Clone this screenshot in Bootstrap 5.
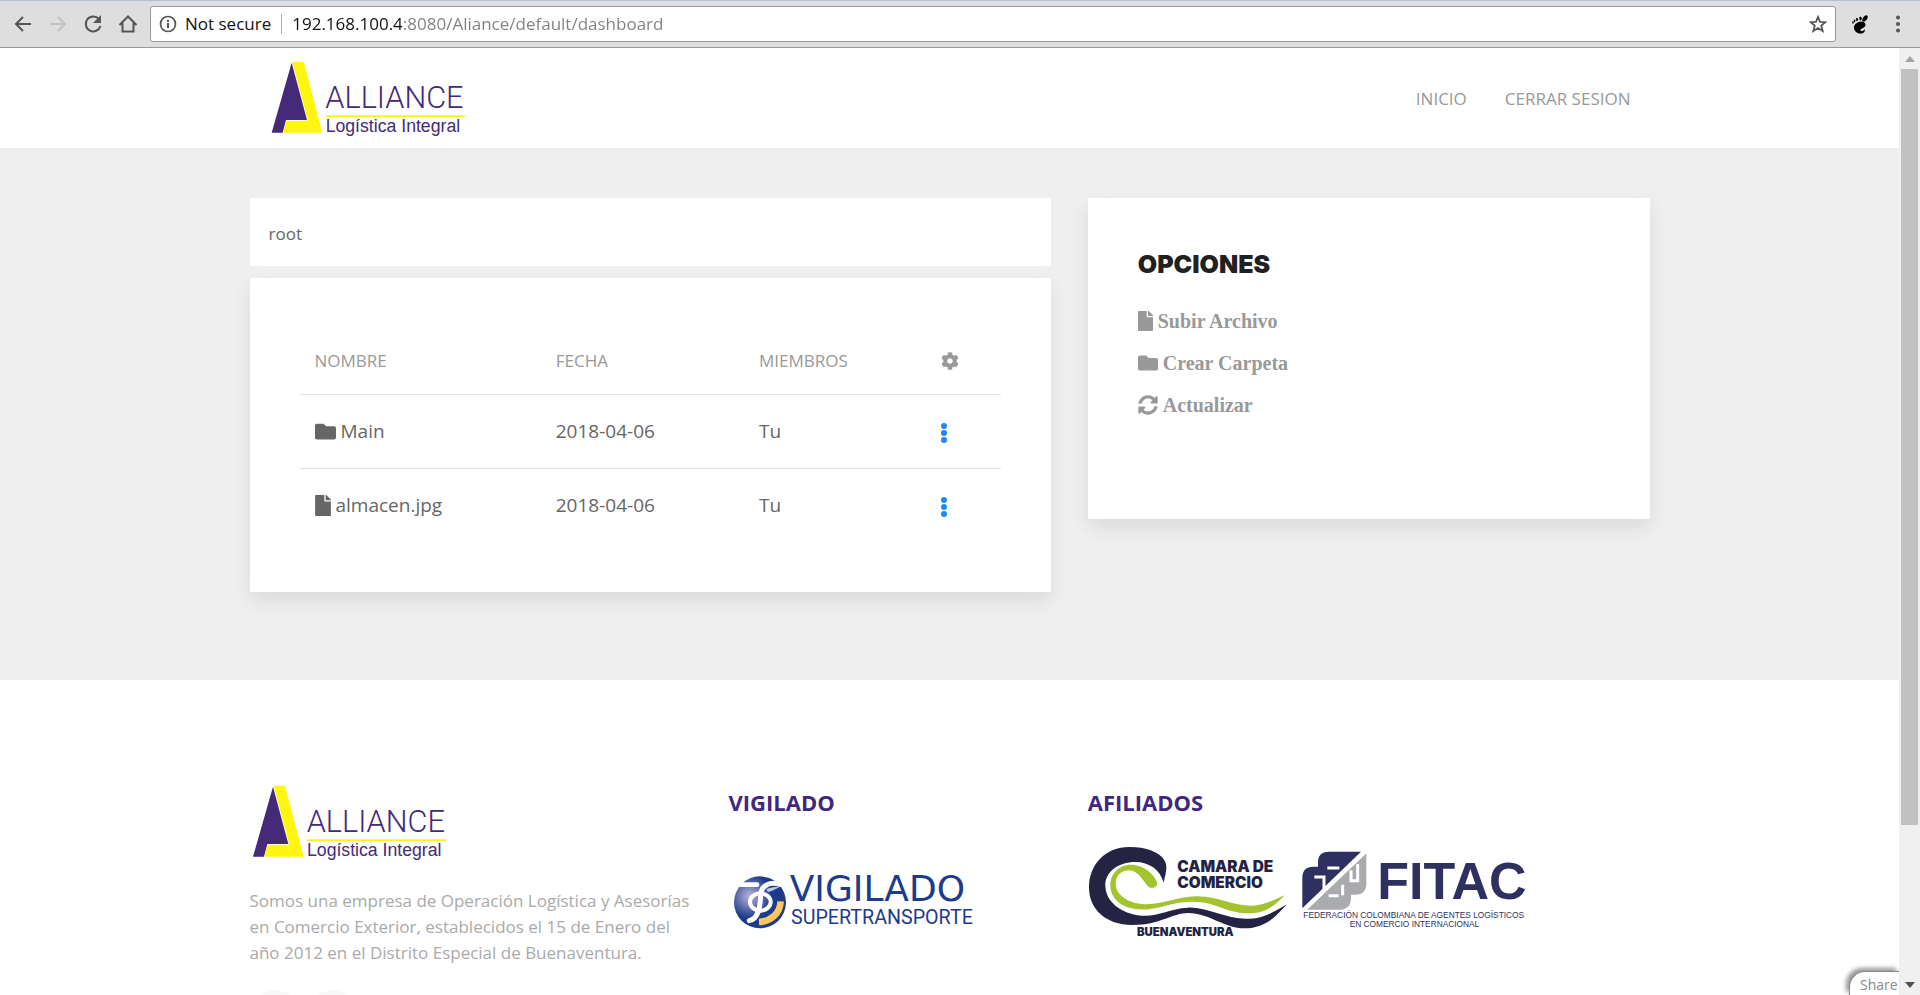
<!DOCTYPE html>
<html lang="es">
<head>
<meta charset="utf-8">
<meta name="viewport" content="width=device-width, initial-scale=1">
<title>Alliance Logística Integral</title>
<link href="https://cdn.jsdelivr.net/npm/bootstrap@5.3.0/dist/css/bootstrap.min.css" rel="stylesheet">
<style>
  body { font-family: "Open Sans", "Noto Sans", sans-serif; font-size: 17px; line-height: 26px; color: #666; background: #fff; }
  a { text-decoration: none; }
  svg { display: block; flex: none; }

  /* browser bar */
  .browser-bar { height: 48px; padding: 0 16px 0 12px; background: #dedede; border-top: 1px solid #b5c0cf; border-bottom: 1px solid #999; }
  .bar-tools { gap: 12px; margin-right: 10px; }
  .bar-btn { display: flex; padding: 0; border: 0; background: none; color: #555; }
  .omnibox { height: 36px; background: #fff; border: 1px solid #999; border-radius: 3px; color: #111; }
  .omnibox .divider { width: 1px; height: 20px; background: #aaa; margin: 0 10px; }
  .omnibox input { border: 0; outline: 0; padding: 0; min-width: 0; color: transparent; background: linear-gradient(90deg, #111 110px, #808080 110px); -webkit-background-clip: text; background-clip: text; }

  /* viewport and scrollbar */
  .view-area { min-height: 0; }
  .page-frame { min-width: 0; }
  .page-view { overflow-y: auto; scrollbar-width: none; min-width: 0; }
  .page-view::-webkit-scrollbar { display: none; }
  .scroll-track { width: 21px; background: #f0f0f0; padding: 0 2px; }
  .scroll-thumb { background: #c1c1c1; flex: 0 1 756px; }
  .scroll-arrow { height: 21px; flex: none; }

  .site-container { max-width: 1437px; --bs-gutter-x: 37px; }
  .site-container .row { --bs-gutter-x: 37px; }
  .site-nav { min-height: 100px; }
  .site-nav .nav-link { padding: 2px 19px 0; color: #999; font-size: 17px; }

  .workspace { background: #efefef; padding: 50px 0 88px; }
  .panel { background: #fff; padding: 50px; }
  .panel-shadow { box-shadow: 0 8px 18px rgba(0,0,0,.09); }
  .crumb { padding: 23px 19px 19px; margin-bottom: 12px; }
  .icon-line { display: flex; align-items: center; gap: 5px; }

  .files { margin: 0; color: #666; font-size: 19px; table-layout: fixed; }
  .files > :not(caption) > * > * { padding: 0 0 0 15px; height: 74px; background: none; color: inherit; border-bottom: 0; border-top: 1px solid #e3e3e3; vertical-align: middle; box-shadow: none; }
  .files > thead > tr > th { height: 66px; border-top: 0; font-weight: 400; font-size: 17px; color: #999; }
  .files .bar-btn { padding-top: 4px; }
  .col-name { width: 34.4%; } .col-date { width: 29%; } .col-members { width: 26%; }

  .options { padding-bottom: 85px; }
  .options h2 { font-family: Inter, "Liberation Sans", sans-serif; font-weight: 900; font-size: 25px; line-height: 32px; color: #212121; margin: 0 0 28px; }
  .options ul { font-family: "Liberation Serif", serif; font-weight: 700; font-size: 20px; }
  .options li { height: 42px; }
  .options a { color: #999; }

  .site-footer { padding: 102px 0 60px; color: #aaa; }
  .site-footer h3 { font-size: 22px; line-height: 32px; font-weight: 700; color: #41277d; margin: 4px 0 0; }
  .about { margin: 26px 0 24px; }
  .seal { margin-top: 54px; }
  .affiliates { margin-top: 26px; gap: 14px; align-items: center; }
  .social { width: 50px; height: 50px; border-radius: 50%; background: #f8f8f8; color: #aaa; }
  .share-tab { position: absolute; right: 0; bottom: 0; height: 24px; width: 50px; padding: 0 0 0 10px; overflow: hidden; background: #fff; border: 1px solid #888; border-width: 1px 0 0 1px; border-radius: 16px 0 0 0; box-shadow: -3px -3px 4px #999; color: #888; font-size: 14px; line-height: 25px; }
</style>
</head>
<body>
<svg width="0" height="0" class="position-absolute" aria-hidden="true">
  <symbol id="i-folder" viewBox="0 0 512 512"><path fill="currentColor" d="M464 128H272l-64-64H48C21.500 64 0 85.500 0 112v288c0 26.500 21.500 48 48 48h416c26.500 0 48-21.500 48-48V176c0-26.500-21.500-48-48-48z"/></symbol>
  <symbol id="i-file" viewBox="0 0 384 512"><path fill="currentColor" d="M224 136V0H24C10.700 0 0 10.700 0 24v464c0 13.300 10.700 24 24 24h336c13.300 0 24-10.700 24-24V160H248c-13.200 0-24-10.800-24-24zm160-14.100v6.100H256V0h6.100c6.400 0 12.500 2.500 17 7l97.900 98c4.500 4.500 7 10.600 7 16.900z"/></symbol>
  <symbol id="i-sync" viewBox="0 0 512 512"><path fill="currentColor" d="M370.720 133.280C339.458 104.008 298.888 87.962 255.848 88c-77.458.068-144.328 53.178-162.791 126.850-1.344 5.363-6.122 9.150-11.651 9.150H24.103c-7.498 0-13.194-6.807-11.807-14.176C33.933 94.924 134.813 8 256 8c66.448 0 126.791 26.136 171.315 68.685L463.030 40.970C478.149 25.851 504 36.559 504 57.941V192c0 13.255-10.745 24-24 24H345.941c-21.382 0-32.090-25.851-16.971-40.971l41.750-41.749zM32 296h134.059c21.382 0 32.090 25.851 16.971 40.971l-41.750 41.750c31.262 29.273 71.835 45.319 114.876 45.280 77.418-.070 144.315-53.144 162.787-126.849 1.344-5.363 6.122-9.150 11.651-9.150h57.304c7.498 0 13.194 6.807 11.807 14.176C478.067 417.076 377.187 504 256 504c-66.448 0-126.791-26.136-171.315-68.685L48.970 471.030C33.851 486.149 8 475.441 8 454.059V320c0-13.255 10.745-24 24-24z"/></symbol>
  <symbol id="i-cog" viewBox="0 0 512 512"><path fill="currentColor" d="M487.4 315.7l-42.6-24.6c4.3-23.2 4.3-47 0-70.2l42.6-24.6c4.9-2.8 7.1-8.6 5.5-14-11.1-35.600-30-67.800-54.700-94.600-3.800-4.100-10-5.100-14.800-2.300L380.800 110c-17.900-15.400-38.500-27.300-60.800-35.100V25.800c0-5.600-3.900-10.500-9.400-11.700-36.700-8.200-74.300-7.800-109.200 0-5.500 1.200-9.400 6.100-9.400 11.700V75c-22.200 7.900-42.800 19.800-60.800 35.100L88.700 85.500c-4.900-2.800-11-1.900-14.800 2.300-24.700 26.700-43.600 58.900-54.700 94.600-1.700 5.400.6 11.200 5.500 14L67.300 221c-4.300 23.200-4.300 47 0 70.200l-42.600 24.600c-4.900 2.800-7.100 8.600-5.500 14 11.100 35.600 30 67.800 54.700 94.600 3.800 4.100 10 5.100 14.800 2.300l42.600-24.600c17.900 15.400 38.500 27.300 60.800 35.100v49.200c0 5.600 3.900 10.500 9.400 11.700 36.700 8.200 74.300 7.800 109.200 0 5.500-1.200 9.400-6.100 9.400-11.700v-49.200c22.200-7.900 42.800-19.800 60.800-35.100l42.600 24.600c4.900 2.800 11 1.900 14.800-2.300 24.700-26.700 43.600-58.900 54.700-94.600 1.500-5.500-.7-11.300-5.600-14.100zM256 336c-44.100 0-80-35.900-80-80s35.900-80 80-80 80 35.900 80 80-35.900 80-80 80z"/></symbol>
  <symbol id="i-dots" viewBox="0 0 6 20"><g fill="#1e88f5"><circle cx="3" cy="3" r="3"/><circle cx="3" cy="10" r="3"/><circle cx="3" cy="17" r="3"/></g></symbol>
</svg>

<div class="vh-100 d-flex flex-column">
  <div class="browser-bar d-flex align-items-center flex-shrink-0">
    <div class="bar-tools d-flex align-items-center">
      <button class="bar-btn" type="button" aria-label="Atrás"><svg width="22" height="22" viewBox="0 0 22 22" fill="none" stroke="currentColor" stroke-width="2"><path d="M19 11H4M11 4l-7 7 7 7"/></svg></button>
      <button class="bar-btn" type="button" aria-label="Adelante" disabled><svg width="24" height="22" viewBox="0 0 24 22" fill="none" stroke="#c2c2c2" stroke-width="2"><path d="M4 11h15M12 4l7 7-7 7"/></svg></button>
      <button class="bar-btn" type="button" aria-label="Recargar"><svg width="22" height="22" viewBox="0 0 22 22"><path d="M17 6a7.500 7.500 0 1 0 1.500 7" fill="none" stroke="currentColor" stroke-width="2"/><path d="M19 2v8h-8z" fill="currentColor"/></svg></button>
      <button class="bar-btn" type="button" aria-label="Inicio"><svg width="24" height="22" viewBox="0 0 24 22" fill="none" stroke="currentColor" stroke-width="2"><path d="M3.500 12 12 3.500l8.500 8.500M6.500 10v8.500h11V10"/></svg></button>
    </div>
    <div class="omnibox d-flex align-items-center flex-grow-1">
      <svg class="ms-2" width="18" height="18" viewBox="0 0 18 18"><circle cx="9" cy="9" r="7.500" fill="none" stroke="#555" stroke-width="1.700"/><path d="M8 8h2v5H8zM8 5h2v2H8z" fill="#555"/></svg>
      <label for="url" class="ms-2 text-nowrap">Not secure</label>
      <span class="divider"></span>
      <input id="url" class="flex-grow-1" type="text" value="192.168.100.4:8080/Aliance/default/dashboard">
      <button class="bar-btn me-2" type="button" aria-label="Favorito"><svg width="18" height="18" viewBox="0 0 18 18"><path d="M9 1.800l2 5.100 5.400.3-4.200 3.400 1.500 5.400L9 13l-4.700 3 1.500-5.400-4.200-3.400 5.400-.3z" fill="none" stroke="currentColor" stroke-width="1.700"/></svg></button>
    </div>
    <button class="bar-btn ms-3" type="button" aria-label="Extensión"><svg width="16" height="19" viewBox="0 0 16 19" fill="#000"><path d="M13.500 9.500C13 6.500 9 5.500 5.500 7.500 2 9.500 1 12 2.500 15c1.500 3 5 4 7.500 3.500 2.500-.6 3.500-3 2.500-4.500-.5 2-3 3-4 1.500-1-2 5.500-2.500 5-6z"/><ellipse cx="13" cy="3.500" rx="2" ry="3.600" transform="rotate(35 13 3.500)"/><ellipse cx="8.500" cy="3.400" rx="1.200" ry="2"/><ellipse cx="5" cy="4.500" rx="1" ry="1.700"/><ellipse cx="2.600" cy="5.800" rx=".9" ry="1.400"/><ellipse cx="1" cy="7.400" rx=".8" ry="1.200"/></svg></button>
    <button class="bar-btn ms-4" type="button" aria-label="Menú"><svg width="12" height="18" viewBox="0 0 12 18" fill="#555"><circle cx="6" cy="2.500" r="2"/><circle cx="6" cy="9" r="2"/><circle cx="6" cy="15.500" r="2"/></svg></button>
  </div>

  <div class="view-area d-flex flex-grow-1">
    <div class="page-frame position-relative d-flex flex-grow-1">
    <div class="page-view flex-grow-1">
      <header class="container-fluid site-container">
        <nav class="site-nav navbar p-0 d-flex justify-content-between align-items-center">
          <a href="#" class="ps-3 ms-1" aria-label="Alliance">
            <svg width="200" height="80" viewBox="90 26 600 240">
              <path fill="#442a78" d="M155 40 95 250h33l10-38h63z"/>
              <path fill="#fff50f" d="M157 37h34l56 213H129l10-36h65z"/>
              <path fill="#fff50f" d="M258 198h416v6H258z"/>
              <text x="256" y="176" font-family="Roboto, sans-serif" font-weight="300" font-size="92" fill="#442a78">ALLIANCE</text>
              <text x="257" y="247" font-family="Liberation Sans, sans-serif" font-size="53" fill="#442a78">Logística Integral</text>
            </svg>
          </a>
          <div class="d-flex">
            <a class="nav-link" href="#">INICIO</a>
            <a class="nav-link" href="#">CERRAR SESION</a>
          </div>
        </nav>
      </header>

      <main class="workspace">
        <div class="container-fluid site-container">
          <div class="row">
            <div class="col-lg-7">
              <div class="panel crumb">root</div>
              <div class="panel panel-shadow">
                <table class="table files">
                  <thead><tr><th class="col-name">NOMBRE</th><th class="col-date">FECHA</th><th class="col-members">MIEMBROS</th><th><svg width="18" height="18"><use href="#i-cog"/></svg></th></tr></thead>
                  <tbody>
                    <tr><td><span class="icon-line"><svg width="21" height="21"><use href="#i-folder"/></svg>Main</span></td><td>2018-04-06</td><td>Tu</td><td><button class="bar-btn" type="button" aria-label="Opciones de Main"><svg width="6" height="20"><use href="#i-dots"/></svg></button></td></tr>
                    <tr><td><span class="icon-line"><svg width="16" height="21"><use href="#i-file"/></svg>almacen.jpg</span></td><td>2018-04-06</td><td>Tu</td><td><button class="bar-btn" type="button" aria-label="Opciones de almacen.jpg"><svg width="6" height="20"><use href="#i-dots"/></svg></button></td></tr>
                  </tbody>
                </table>
              </div>
            </div>
            <div class="col-lg-5">
              <div class="panel panel-shadow options">
                <h2>OPCIONES</h2>
                <ul class="list-unstyled mb-0">
                  <li><a href="#" class="icon-line"><svg width="15" height="20"><use href="#i-file"/></svg>Subir Archivo</a></li>
                  <li><a href="#" class="icon-line"><svg width="20" height="20"><use href="#i-folder"/></svg>Crear Carpeta</a></li>
                  <li><a href="#" class="icon-line"><svg width="20" height="20"><use href="#i-sync"/></svg>Actualizar</a></li>
                </ul>
              </div>
            </div>
          </div>
        </div>
      </main>

      <footer class="site-footer">
        <div class="container-fluid site-container">
          <div class="row">
            <div class="col-lg-4">
              <svg width="200" height="80" viewBox="86 26 600 240" role="img" aria-label="Alliance">
                <path fill="#442a78" d="M155 40 95 250h33l10-38h63z"/>
                <path fill="#fff50f" d="M157 37h34l56 213H129l10-36h65z"/>
                <path fill="#fff50f" d="M258 198h416v6H258z"/>
                <text x="256" y="176" font-family="Roboto, sans-serif" font-weight="300" font-size="92" fill="#442a78">ALLIANCE</text>
                <text x="257" y="247" font-family="Liberation Sans, sans-serif" font-size="53" fill="#442a78">Logística Integral</text>
              </svg>
              <p class="about">Somos una empresa de Operación Logística y Asesorías en Comercio Exterior, establecidos el 15 de Enero del año 2012 en el Distrito Especial de Buenaventura.</p>
              <div class="d-flex gap-2">
                <a class="social" href="#" aria-label="Facebook"></a>
                <a class="social" href="#" aria-label="Twitter"></a>
              </div>
            </div>
            <div class="col-lg-3">
              <h3>VIGILADO</h3>
              <svg class="seal" width="250" height="62" viewBox="56 300 750 186" role="img" aria-label="Vigilado Supertransporte">
                <defs><radialGradient id="globe" cx=".3" cy=".38" r=".42"><stop offset="0" stop-color="#b9b4d8"/><stop offset="1" stop-color="#1d3b8b"/></radialGradient></defs>
                <circle cx="149" cy="391" r="78" fill="url(#globe)"/>
                <path d="M90 338h50" stroke="#fff" stroke-width="14" stroke-linecap="round"/>
                <path d="M208 337c-30-9-56 3-57 33-2 40-8 70-34 76" fill="none" stroke="#fff" stroke-width="15" stroke-linecap="round"/>
                <ellipse cx="150" cy="390" rx="31" ry="26" fill="none" stroke="#fff" stroke-width="12"/>
                <path d="M169 351c15-6 28-7 38-6-9 6-24 14-35 15z" fill="#bdcbe6"/>
                <path d="M211 388c-2 37-29 60-65 62" fill="none" stroke="#fdc75a" stroke-width="20"/>
                <g fill="#1d3b8b"><text x="238" y="386" font-family="DejaVu Sans, sans-serif" font-size="108">VIGILADO</text>
                <text x="242" y="457" font-family="Roboto, sans-serif" font-size="59">SUPERTRANSPORTE</text></g>
              </svg>
            </div>
            <div class="col-lg-5">
              <h3>AFILIADOS</h3>
              <div class="affiliates d-flex">
              <svg width="200" height="92" viewBox="24 222 600 276" role="img" aria-label="Cámara de Comercio Buenaventura">
                <path fill="#252344" d="M251 338c6-28 13-48 3-66-15-27-56-41-106-41C76 231 27 284 27 352c0 66 50 113 130 113 84 0 119-36 168-36 61 0 108 46 169 46 62 0 98-39 126-72-38 24-71 41-110 43-71 4-129-36-187-33-56 3-90 28-139 24-61-5-108-42-108-91 0-41 39-70 90-70 42 0 75 24 85 62z"/>
                <path fill="#a3c32f" d="M207 352c12 5 26-2 24-15-8-25-41-53-79-53-35 0-61 27-61 61 0 39 30 66 76 72 63 8 95-21 169-22 75-1 100 37 178 35 47-1 77-30 100-54-36 16-67 31-99 31-61 0-104-30-168-28-61 2-106 28-160 23-45-4-80-29-80-61 0-24 17-40 40-40 29 0 44 36 60 51z"/>
                <g fill="#252344" font-family="Inter, sans-serif" font-weight="900"><text x="292" y="307" font-size="46">CAMARA DE</text><text x="292" y="355" font-size="46">COMERCIO</text><text x="171" y="497" font-size="34">BUENAVENTURA</text></g>
              </svg>
              <svg width="226" height="78" viewBox="38 70 678 234" role="img" aria-label="FITAC">
                <path fill="#2e3060" d="M39 242V149c0-20 12-32 32-32h15v-13c0-21 11-32 32-32h97z"/>
                <path fill="#aaabae" d="m53 246 178-171v93c0 20-11 33-32 33h-14v11c0 21-12 34-33 34z"/>
                <path fill="none" stroke="#fff" stroke-width="9" d="M104 191v-43H75M150 121h-36M160 171v32M118 204h30M205 109v50h-20v-31"/>
                <path stroke="#fff" stroke-width="12" d="M38 252 232 68"/>
                <g fill="#2e3060" font-family="Liberation Sans, sans-serif"><text x="264" y="214" font-size="156" font-weight="700">FITAC</text><text x="42" y="272" font-size="25">FEDERACIÓN COLOMBIANA DE AGENTES LOGÍSTICOS</text><text x="181" y="299" font-size="25">EN COMERCIO INTERNACIONAL</text></g>
              </svg>
              </div>
            </div>
          </div>
        </div>
      </footer>
    </div>
    <button class="share-tab text-start" type="button">Share</button>
    </div>

    <div class="scroll-track d-flex flex-column flex-shrink-0" aria-hidden="true">
      <div class="scroll-arrow d-flex align-items-center justify-content-center"><svg width="10" height="6" viewBox="0 0 10 6"><path d="M0 6 5 0l5 6z" fill="#a3a3a3"/></svg></div>
      <div class="scroll-thumb"></div>
      <div class="scroll-arrow d-flex align-items-center justify-content-center mt-auto"><svg width="10" height="6" viewBox="0 0 10 6"><path d="M0 0h10L5 6z" fill="#505050"/></svg></div>
    </div>
  </div>
</div>
<script src="https://cdn.jsdelivr.net/npm/bootstrap@5.3.0/dist/js/bootstrap.bundle.min.js"></script>
</body>
</html>
